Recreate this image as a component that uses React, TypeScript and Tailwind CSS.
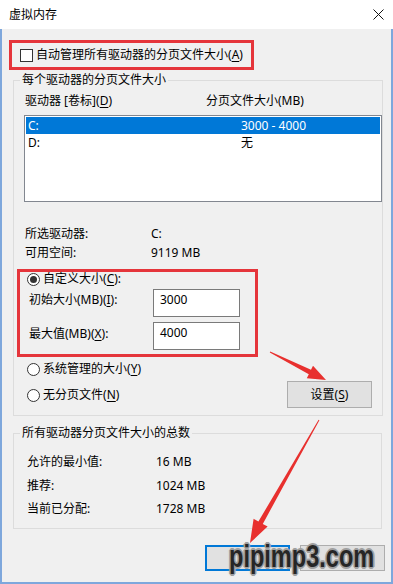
import React from 'react';

const font = { fontFamily: '"Noto Sans", "Noto Sans CJK SC", sans-serif' };

function Radio({ checked }: { checked?: boolean }) {
  return (
    <span className="flex h-[13px] w-[13px] shrink-0 items-center justify-center rounded-full border border-[#333] bg-white">
      {checked && <span className="h-[7px] w-[7px] rounded-full bg-[#333]" />}
    </span>
  );
}

function Key({ k }: { k: string }) {
  return (
    <>
      (<span className="underline underline-offset-2">{k}</span>)
    </>
  );
}

export default function App() {
  const drives = [
    { name: 'C:', size: '3000 - 4000', selected: true },
    { name: 'D:', size: '无', selected: false },
  ];

  const totals = [
    { label: '允许的最小值:', value: '16 MB', mt: 'mt-[13px]' },
    { label: '推荐:', value: '1024 MB', mt: 'mt-[8px]' },
    { label: '当前已分配:', value: '1728 MB', mt: 'mt-[7px]' },
  ];

  return (
    <div
      className="relative flex h-[584px] w-[393px] flex-col overflow-hidden text-[12px] leading-[16px] text-black"
      style={font}
    >
      {/* Title bar */}
      <div className="flex h-[29px] shrink-0 items-center justify-between bg-white pl-[9px] pr-[9px]">
        <span className="text-[12px]">虚拟内存</span>
        <svg width="11" height="11" viewBox="0 0 11 11">
          <path d="M0.5 0.5 L10.5 10.5 M10.5 0.5 L0.5 10.5" stroke="#111" strokeWidth="1" />
        </svg>
      </div>

      {/* Body */}
      <div className="flex flex-1 flex-col border-x-2 border-b-2 border-[#7ea7dc] bg-[#f0f0f0]">
        {/* Auto manage */}
        <div className="ml-[7px] mt-[11px] flex h-[30px] w-[245px] items-center gap-[3px] border-[3px] border-[#e5353b] pl-[8px]">
          <span className="h-[13px] w-[13px] shrink-0 border border-[#333] bg-white" />
          <span>
            自动管理所有驱动器的分页文件大小<Key k="A" />
          </span>
        </div>

        {/* Per drive group */}
        <fieldset className="ml-[11px] mt-[2px] h-[344px] w-[370px] border border-[#dcdcdc]">
          <legend className="ml-[6px] px-[2px] leading-[16px]">每个驱动器的分页文件大小</legend>

          <div className="mt-[5px] flex h-[16px] pl-[11px]">
            <span className="w-[181px]">
              驱动器 [卷标]<Key k="D" />
            </span>
            <span>分页文件大小(MB)</span>
          </div>

          <div className="ml-[10px] mt-[6px] h-[87px] w-[358px] border border-[#828790] bg-white p-[1px]">
            {drives.map((d) => (
              <div
                key={d.name}
                className={`flex h-[17px] items-center pl-[2px] ${d.selected ? 'bg-[#0078d7] text-white' : ''}`}
              >
                <span className="w-[213px]">{d.name}</span>
                <span>{d.size}</span>
              </div>
            ))}
          </div>

          <div className="mt-[24px] flex h-[16px] pl-[11px]">
            <span className="w-[126px]">所选驱动器:</span>
            <span>C:</span>
          </div>
          <div className="mt-[3px] flex h-[16px] pl-[11px]">
            <span className="w-[126px]">可用空间:</span>
            <span>9119 MB</span>
          </div>

          {/* Custom size */}
          <div className="ml-[3px] mt-[8px] h-[88px] w-[241px] border-[3px] border-[#e5353b]">
            <div className="flex h-[14px] items-center gap-[3px] pl-[7px]">
              <Radio checked />
              <span>
                自定义大小<Key k="C" />:
              </span>
            </div>
            <div className="mt-[3px] flex pl-[9px]">
              <span className="mt-[3px] w-[124px]">
                初始大小(MB)<Key k="I" />:
              </span>
              <div className="h-[28px] w-[87px] border border-[#7a7a7a] bg-white px-[6px] pt-[2px]">3000</div>
            </div>
            <div className="mt-[5px] flex pl-[9px]">
              <span className="mt-[4px] w-[124px]">
                最大值(MB)<Key k="X" />:
              </span>
              <div className="h-[28px] w-[87px] border border-[#7a7a7a] bg-white px-[6px] pt-[2px]">4000</div>
            </div>
          </div>

          <div className="mt-[4px] flex justify-between">
            <div className="flex flex-col pl-[13px]">
              <div className="flex h-[16px] items-center gap-[3px]">
                <Radio />
                <span>
                  系统管理的大小<Key k="Y" />
                </span>
              </div>
              <div className="mt-[10px] flex h-[16px] items-center gap-[3px]">
                <Radio />
                <span>
                  无分页文件<Key k="N" />
                </span>
              </div>
            </div>
            <button className="mr-[10px] mt-[20px] flex h-[27px] w-[85px] items-center justify-center border border-[#adadad] bg-[#e1e1e1]">
              设置<Key k="S" />
            </button>
          </div>
        </fieldset>

        {/* Totals group */}
        <fieldset className="ml-[11px] mt-[9px] h-[104px] w-[369px] border border-[#dcdcdc]">
          <legend className="ml-[6px] px-[2px] leading-[16px]">所有驱动器分页文件大小的总数</legend>
          {totals.map((t) => (
            <div key={t.label} className={`${t.mt} flex h-[16px] pl-[13px]`}>
              <span className="w-[129px]">{t.label}</span>
              <span>{t.value}</span>
            </div>
          ))}
        </fieldset>

        {/* OK / Cancel, labels hidden under the watermark */}
        <div className="mt-[16px] flex justify-end gap-[10px] pr-[6px]">
          <button className="h-[26px] w-[85px] border-2 border-[#0078d7] bg-[#e1e1e1]" aria-label="确定" />
          <button className="h-[26px] w-[85px] border border-[#adadad] bg-[#e1e1e1]" aria-label="取消" />
        </div>
      </div>

      {/* Red arrows drawn over the dialog */}
      <svg className="pointer-events-none absolute left-0 top-0" width="393" height="584" viewBox="0 0 393 584">
        <polygon
          points="269.8,352.4 308.8,374.2 306.8,378.3 326,380 313,365.7 311,369.8 270.2,351.6"
          fill="#e8302e"
        />
        <polygon
          points="319.4,420.2 262.8,523.9 267.6,526.6 250,543 253.6,518.8 258.4,521.5 318.6,419.8"
          fill="#e8302e"
        />
      </svg>

      {/* Watermark */}
      <div
        className="pointer-events-none absolute left-[229px] top-[541px] origin-left scale-x-[0.76] text-[31px] font-bold leading-[31px] text-[#262626] [text-shadow:2px_0_0_#a0a0a0,-2px_0_0_#a0a0a0,0_2px_0_#a0a0a0,0_-2px_0_#a0a0a0,1px_1px_0_#a0a0a0,-1px_-1px_0_#a0a0a0,1px_-1px_0_#a0a0a0,-1px_1px_0_#a0a0a0,0_0_4px_#c4c4c4]"
        style={{ fontFamily: '"Liberation Sans", Arial, sans-serif' }}
      >
        pipimp3.com
      </div>
    </div>
  );
}
